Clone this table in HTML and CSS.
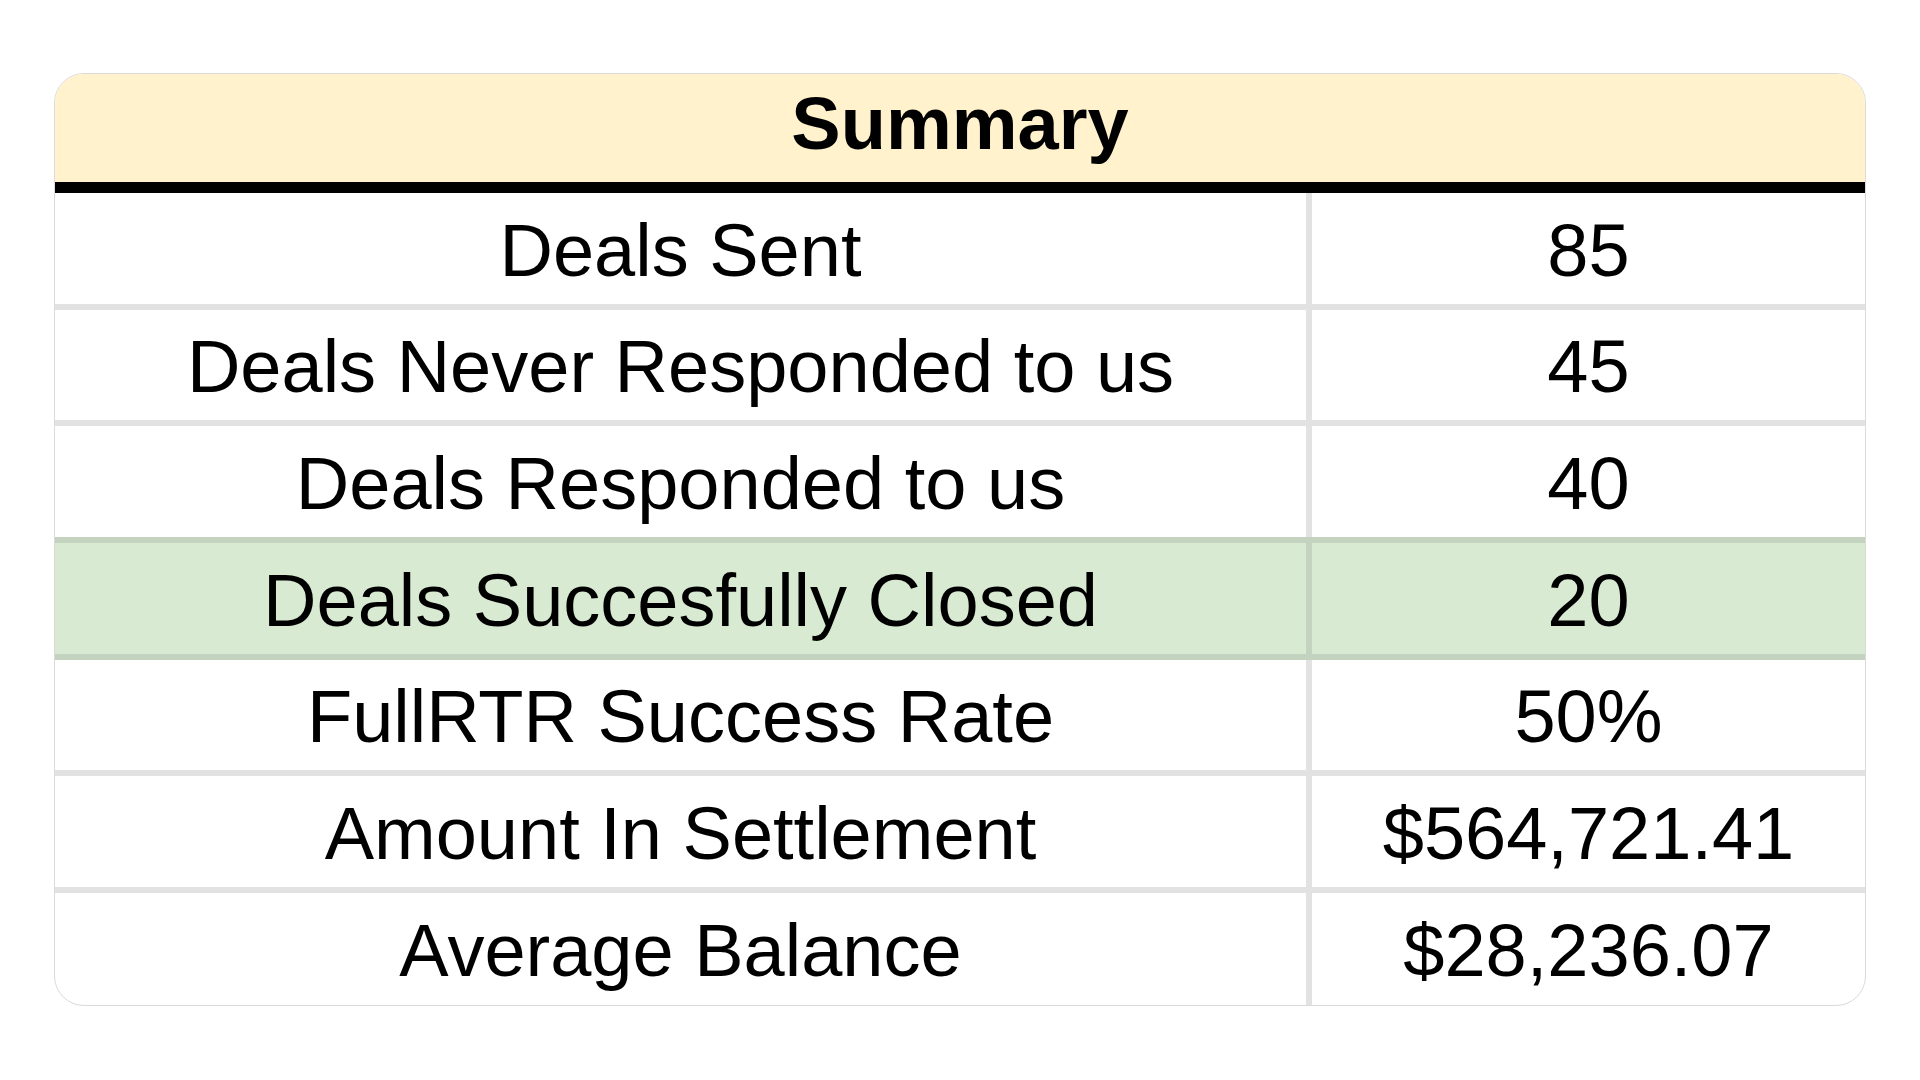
FILE: index.html
```html
<!DOCTYPE html>
<html lang="en">
<head>
<meta charset="utf-8">
<title>Summary</title>
<link rel="stylesheet" href="styles.css">
</head>
<body>
<div class="card">
  <div class="header">Summary</div>
  <div class="row"><div class="label">Deals Sent</div><div class="value">85</div></div>
  <div class="row"><div class="label">Deals Never Responded to us</div><div class="value">45</div></div>
  <div class="row before-green"><div class="label">Deals Responded to us</div><div class="value">40</div></div>
  <div class="row green"><div class="label">Deals Succesfully Closed</div><div class="value">20</div></div>
  <div class="row"><div class="label">FullRTR Success Rate</div><div class="value">50%</div></div>
  <div class="row"><div class="label">Amount In Settlement</div><div class="value">$564,721.41</div></div>
  <div class="row last"><div class="label">Average Balance</div><div class="value">$28,236.07</div></div>
</div>
</body>
</html>
```
FILE: styles.css
```css
html, body {
  margin: 0;
  padding: 0;
  background: #ffffff;
}
body {
  padding: 73px 54px;
  font-family: "Liberation Sans", Arial, sans-serif;
  color: #000;
}
.card {
  width: 1810px;
  border: 1px solid #dadada;
  border-radius: 30px;
  overflow: hidden;
  background: #fff;
}
.header {
  height: 119px;
  box-sizing: border-box;
  padding-bottom: 10px;
  background: #fff2cc;
  border-bottom: 11px solid #000;
  display: flex;
  align-items: center;
  justify-content: center;
  font-weight: bold;
  font-size: 74px;
}
.row {
  display: grid;
  grid-template-columns: 1257px 553px;
  height: 116.67px;
  box-sizing: border-box;
  border-bottom: 6px solid #e2e2e2;
  font-size: 74px;
}
.row.last {
  height: 112px;
  border-bottom: none;
}
.row.before-green {
  border-bottom-color: #c4d3bf;
}
.row.green {
  background: #d9ead3;
  border-bottom-color: #c4d3bf;
}
.label, .value {
  display: flex;
  align-items: center;
  justify-content: center;
  white-space: nowrap;
  padding-top: 4px;
}
.label {
  border-right: 6px solid #e2e2e2;
}
.row.green .label {
  border-right-color: #c4d3bf;
}
```
